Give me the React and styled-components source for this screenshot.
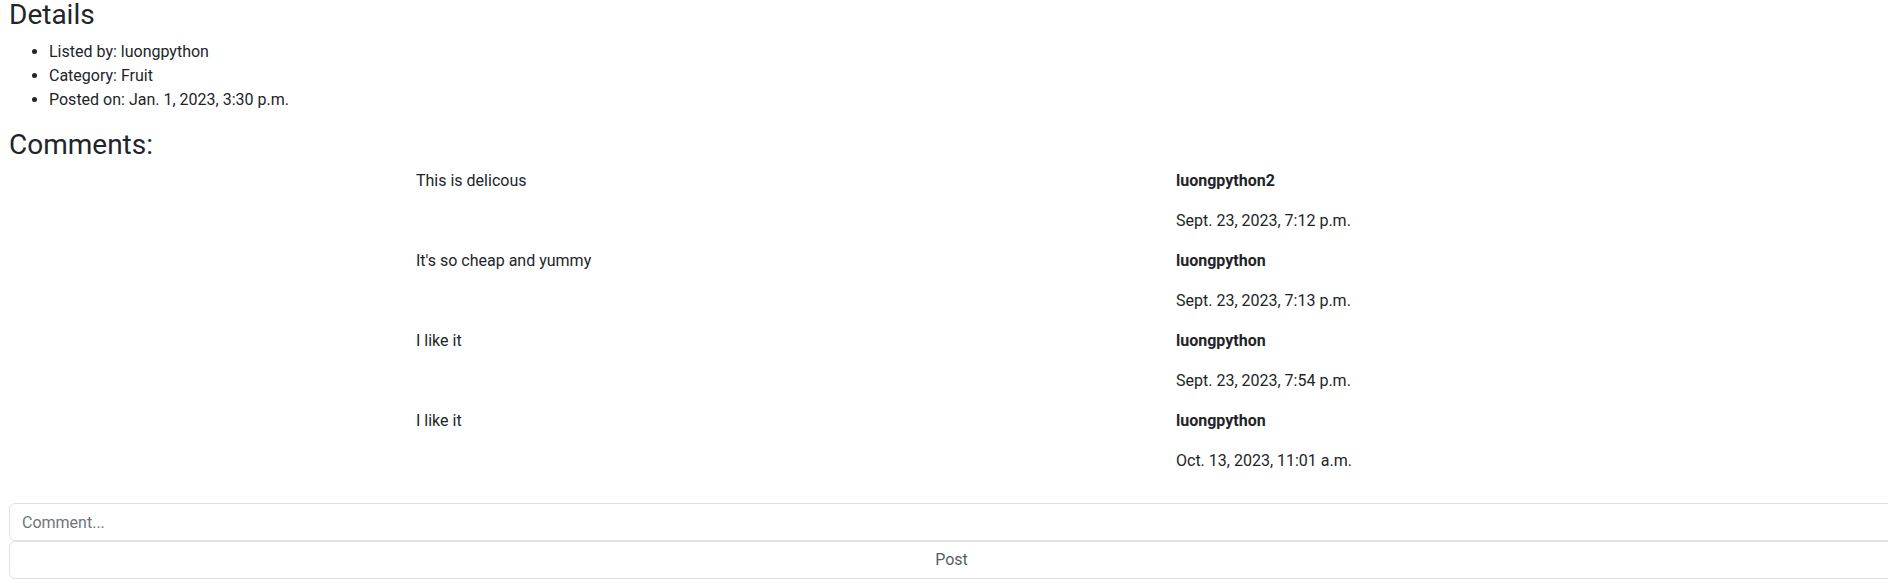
import styled, { createGlobalStyle } from 'styled-components'

const details = [
  'Listed by: luongpython',
  'Category: Fruit',
  'Posted on: Jan. 1, 2023, 3:30 p.m.',
]

const comments = [
  { text: 'This is delicous', author: 'luongpython2', date: 'Sept. 23, 2023, 7:12 p.m.' },
  { text: "It's so cheap and yummy", author: 'luongpython', date: 'Sept. 23, 2023, 7:13 p.m.' },
  { text: 'I like it', author: 'luongpython', date: 'Sept. 23, 2023, 7:54 p.m.' },
  { text: 'I like it', author: 'luongpython', date: 'Oct. 13, 2023, 11:01 a.m.' },
]

export default function App() {
  return (
    <>
      <GlobalStyle />
      <Page>
        <Heading>Details</Heading>
        <DetailList>
          {details.map((item) => (
            <li key={item}>{item}</li>
          ))}
        </DetailList>

        <Heading>Comments:</Heading>
        <CommentList>
          {comments.map((c, i) => (
            <CommentRow key={i}>
              <CommentText>{c.text}</CommentText>
              <Meta>
                <Author>{c.author}</Author>
                <Stamp>{c.date}</Stamp>
              </Meta>
            </CommentRow>
          ))}
        </CommentList>

        <CommentForm onSubmit={(e) => e.preventDefault()}>
          <Input type="text" placeholder="Comment..." />
          <PostButton type="submit">Post</PostButton>
        </CommentForm>
      </Page>
    </>
  )
}

const GlobalStyle = createGlobalStyle`
  html, body {
    margin: 0;
    overflow: hidden;
    background: #fff;
  }
  body {
    font-family: Roboto, "Noto Sans", "Liberation Sans", sans-serif;
    font-size: 16px;
    line-height: 1.5;
    color: #212529;
  }
  * {
    box-sizing: border-box;
  }
`

const Page = styled.main`
  width: 1903px;
  margin-top: -2px;
  padding: 0 9px;
`

const Heading = styled.h3`
  margin: 0 0 8px;
  font-size: 28px;
  font-weight: 400;
  line-height: 1.2;
`

const DetailList = styled.ul`
  margin: 0 0 16px;
  padding-left: 40px;
`

const CommentList = styled.div`
  margin-bottom: 14px;
`

const CommentRow = styled.div`
  display: grid;
  grid-template-columns: 407px 760px 1fr;
`

const CommentText = styled.p`
  grid-column: 2;
  margin: 0;
`

const Meta = styled.div`
  grid-column: 3;
`

const Author = styled.p`
  margin: 0 0 16px;
  font-weight: 700;
`

const Stamp = styled.p`
  margin: 0 0 16px;
`

const CommentForm = styled.form`
  display: flex;
  flex-direction: column;
`

const Input = styled.input`
  display: block;
  width: 100%;
  height: 38px;
  padding: 6px 12px;
  font: inherit;
  color: #212529;
  background: #fff;
  border: 1px solid #dee2e6;
  border-radius: 6px;
  outline: none;

  &::placeholder {
    color: #6c757d;
  }
`

const PostButton = styled.button`
  display: block;
  width: 100%;
  height: 38px;
  padding: 6px 12px;
  font: inherit;
  color: #565e66;
  background: #fff;
  border: 1px solid #dee2e6;
  border-radius: 6px;
  cursor: pointer;
`
